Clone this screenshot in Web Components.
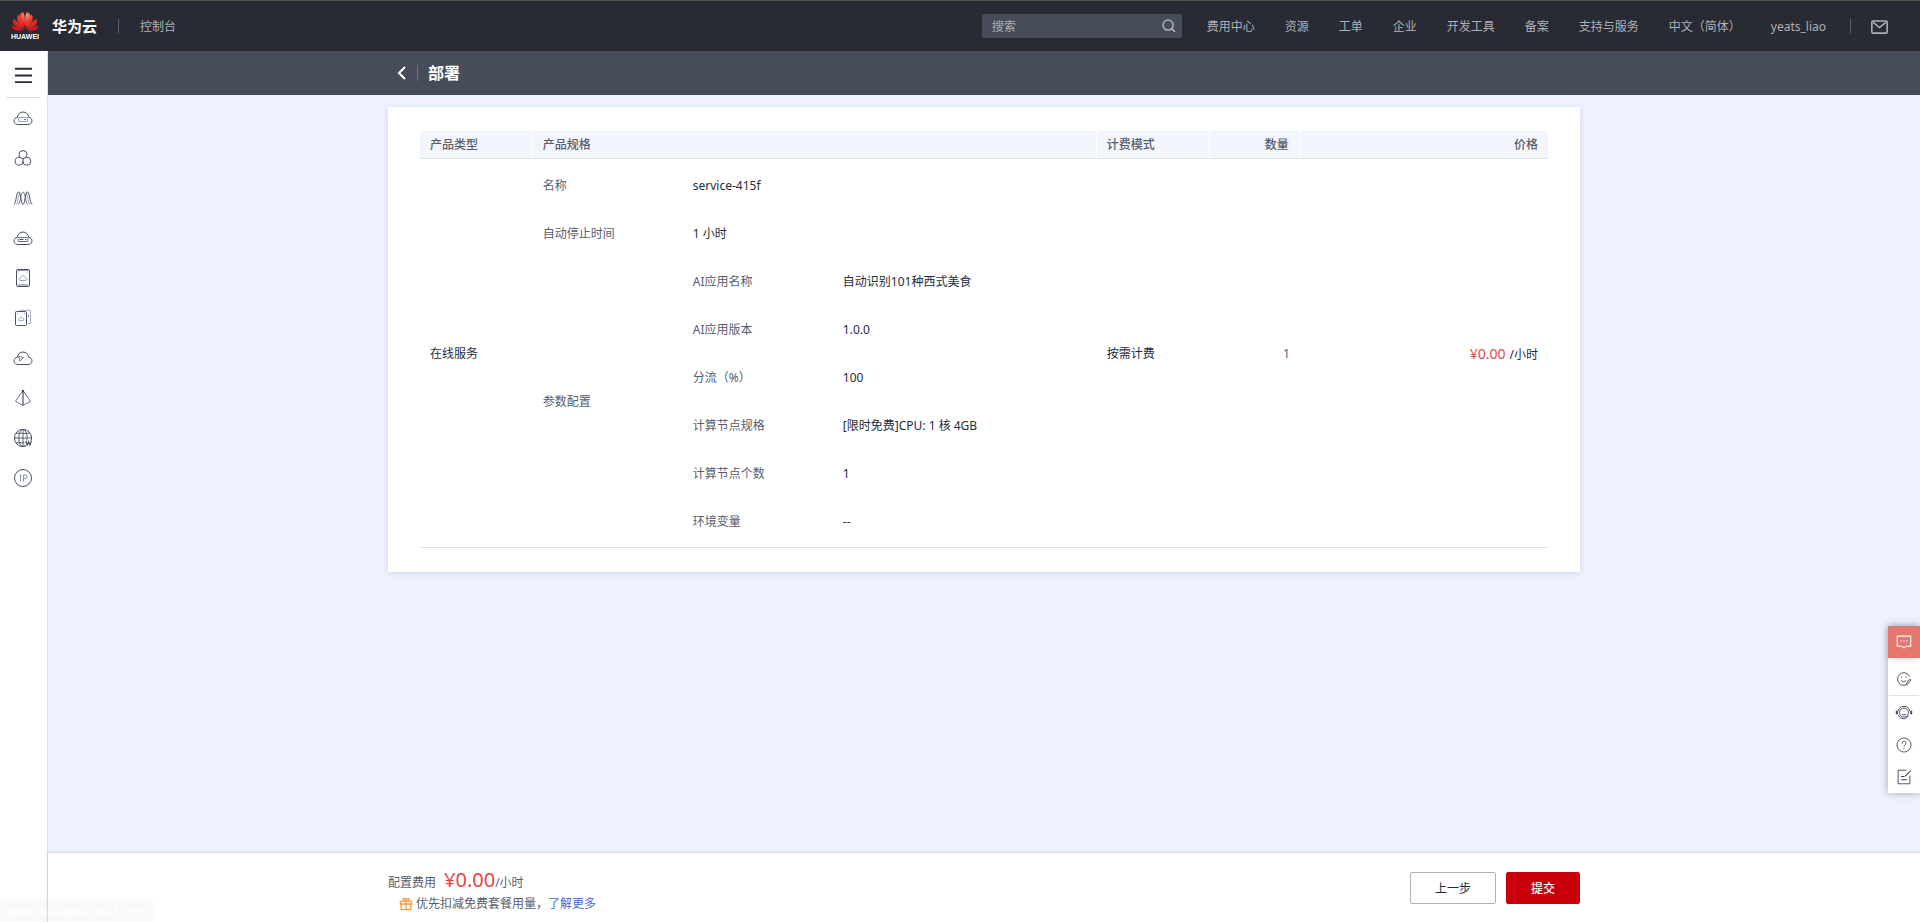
<!DOCTYPE html>
<html lang="zh-CN">
<head>
<meta charset="utf-8">
<meta name="viewport" content="width=device-width, initial-scale=1">
<title>部署 - 华为云</title>
<style>
  body {
    margin: 0;
    font: 12px/18px "Noto Sans", "Noto Sans CJK SC", sans-serif;
    color: #252b3a;
    background: #eef2ff;
  }
</style>
</head>
<body>
<console-app></console-app>

<script>
const define = (name, html, setup) => {
  const template = document.createElement('template');
  template.innerHTML = html;
  customElements.define(name, class extends HTMLElement {
    constructor() {
      super();
      this.attachShadow({ mode: 'open' }).append(template.content.cloneNode(true));
    }
    connectedCallback() {
      if (setup) setup(this, this.shadowRoot);
    }
  });
};

/* Line icons, drawn on a 20 x 20 grid */
const cloud = '<path d="M5 16.500c-2.300 0-4-1.500-4-3.600 0-1.900 1.300-3.200 3.300-3.500C4.500 6.400 6.900 4 10 4s5.500 2.400 5.700 5.400c2 .3 3.300 1.600 3.300 3.500 0 2.100-1.700 3.600-4 3.600z"/>';
const icons = {
  server: cloud + '<rect x="5.500" y="9.500" width="9" height="4" rx=".5" stroke="#7b8db8" stroke-width=".8"/><path d="M11 11.500h2" stroke-width=".8"/>',
  circles: '<circle cx="10" cy="6.600" r="4"/><circle cx="6.200" cy="13.200" r="4"/><circle cx="13.800" cy="13.200" r="4"/><circle cx="10" cy="10.800" r="2.600" fill="#fff" stroke="none"/><path d="M7.400 9.500 10 11l2.600-1.500M10 11v3"/>',
  waves: '<path d="M1 16.500C3.500 14 3.200 4 5.500 4s2.400 12 4.500 12.500C12.100 16 12.200 4 14.500 4s2 10 4.500 12.500"/><path d="M5.500 16.500C7.600 15 7.600 4 10 4s2.400 11 4.500 12.500" stroke-width=".8"/><path d="M3.500 16.500C5 14 5.500 4 7.700 4M12.300 4c2.200 0 2.700 10 4.200 12.500" stroke-width=".5"/>',
  storage: cloud + '<rect x="5" y="9.500" width="10" height="4" rx="1" stroke-width=".8"/><path d="M6.500 11.500h4M12 11.500h1.500"/>',
  disk: '<rect x="3.500" y="1.500" width="13" height="17" rx="1.500"/><path d="M5 2.200h10M5.200 4h.8M14 4h.8M5 17h10" stroke-width=".8"/><path d="M7.500 12.500h5c2 0 1.800-2.700 0-2.700-.4-2.500-4.600-2.500-5 0-1.800 0-2 2.700 0 2.700z" stroke="#7b8db8" stroke-width=".8"/>',
  backup: '<path d="M7 3.500V2.300h10.500v13.200H15" stroke="#a8adc5"/><rect x="2.500" y="3.500" width="11" height="14" rx="1"/><path d="M4.200 5.500H5M11 5.500h.8M15.500 7v2" stroke-width=".8"/><path d="M6.500 12.500h3.300c1.500 0 1.300-2 0-2-.4-1.800-2.900-1.800-3.300 0-1.300 0-1.500 2 0 2z" stroke="#7b8db8" stroke-width=".8"/>',
  cloudbolt: cloud + '<path d="m5.500 8.500 5 1-3.500 3.500-.5-2z" stroke-width=".8"/>',
  prism: '<path d="M10 2.500 2.500 13.200 10 17.500l7.500-4.300z" stroke-width=".8"/><path d="M10 2.500v15" stroke-width="1.200"/><circle cx="10" cy="3.200" r="1.100" fill="#30364a" stroke="none"/>',
  globe: '<circle cx="10" cy="10" r="8.600"/><ellipse cx="10" cy="10" rx="4.200" ry="8.600" stroke-width=".9"/><path d="M10 1.400v17.200M1.400 10h17.200M2.800 5.300h14.400M2.800 14.700h9" stroke-width=".9"/><path d="m12.800 13 1.400 4 1.400-3.500L17 17l1.400-4" stroke="#fff" stroke-width="3"/><path d="m12.800 13 1.400 4 1.400-3.500L17 17l1.400-4" stroke-width="1.200"/>',
  ip: '<circle cx="10" cy="10" r="8.500"/><path d="M7.500 6.500v7M10.400 13.500V6.900h1.500c2.800 0 2.800 3.800 0 3.800h-1.500" stroke="#8088a8"/>',
  menu: '<path d="M1 4h18M1 11h18M1 18h18" stroke-width="2"/>',
  search: '<circle cx="9" cy="9" r="5.600" stroke-width="1.700"/><path d="m13 13 3.600 3.600" stroke-width="2"/>',
  mail: '<rect x="2.700" y="4.700" width="14.600" height="11.600" rx="1" stroke-width="1.500"/><path d="m4 6 6 5 6-5" stroke-width="1.500"/>',
  back: '<path d="m13 4-6 6 6 6" stroke-width="2"/>',
  chat: '<path d="M2.500 3.500h15v11.200h-5.300L10 16.800l-2.200-2.100H2.500z" stroke-width="1.200"/><path d="M6 9h1.400M9.300 9h1.400M12.600 9H14" stroke-width="1.400"/>',
  smile: '<path d="M16.300 7.300A7 7 0 1 0 12.300 16.600c2.200-1 4.200-3.300 5.200-6-1.400 0-2.600.6-3.200 1.700-.6 1.200-.9 2.700-2 4.300"/><path d="M7.300 7.500v1.200M12.300 7.500v1.200M6.500 11.300c1.500 2.200 4.500 2.200 5.700 0"/>',
  headset: '<path d="M3.500 8c.5-3.500 3-5.500 6.500-5.500s6 2 6.500 5.500"/><circle cx="10" cy="9.500" r="5"/><path d="M2 7.500v4M18 7.500v4" stroke-width="2.200"/><path d="M7.500 11c1.200 1.500 3.800 1.500 5 0M3.500 12c1 3 3.500 4.300 6.500 4.300h1M11 16.300l4-3"/>',
  help: '<circle cx="10" cy="10" r="7.800"/><path d="M7.700 8.500c0-3.300 4.600-3.200 4.600-.5 0 1.800-2.300 1.900-2.300 4M10 13.300v1.400"/>',
  edit: '<path d="M16.500 8.500v9h-13v-15h9"/><path d="m17.500 3-6.300 6.300M6.500 9.500h4M6.500 13h7" stroke-width="1.200"/>',
  gift: '<path d="M2 6h16v4H2zM3 10v8h14v-8M10 6v12M10 6C5 6 5 2 7 2s3 2.500 3 4c0-1.500 1-4 3-4s2 4-3 4z" stroke-width="1.800"/>'
};

define('line-icon', `
  <style>
    :host { display: inline-block; width: 20px; height: 20px; flex: none; }
    svg { display: block; width: 100%; height: 100%; fill: none; stroke: currentColor; stroke-width: 1; }
  </style>
  <svg viewBox="0 0 20 20" aria-hidden="true"></svg>`,
  (host, root) => { root.querySelector('svg').innerHTML = icons[host.getAttribute('name')]; });

define('brand-logo', `
  <style>
    :host { display: flex; align-items: center; gap: 13px; }
    svg { display: block; width: 28px; height: 30px; }
    text { font: bold 7px "Liberation Sans", sans-serif; fill: #fff; }
    a { color: #fff; text-decoration: none; font-size: 15px; font-weight: bold; }
  </style>
  <svg viewBox="0 0 28 30" aria-hidden="true">
    <defs><radialGradient id="g" gradientUnits="userSpaceOnUse" cx="15" cy="4" r="19">
      <stop offset="0" stop-color="#f59a78"/><stop offset=".35" stop-color="#ea3a2b"/><stop offset="1" stop-color="#d01018"/>
    </radialGradient></defs>
    <g fill="url(#g)">
      <path d="M13.600 17.800C13 14 11.500 7 7.800 3.500 5.500 5 5.800 8 7 10.500c1.500 3 4.500 5.500 6.600 7.300z"/>
      <path d="M14.400 17.800C15 14 16.500 7 20.200 3.500c2.300 1.500 2 4.500.8 7-1.500 3-4.500 5.500-6.600 7.300z"/>
      <path d="M13.800 15.500C14.200 10.500 14 5 12.600 1.500 9.500 1.300 8.200 3.500 9.200 6c1 3.200 3.200 6.500 4.600 9.500z"/>
      <path d="M14.200 15.500C13.800 10.500 14 5 15.400 1.500c3.100-.2 4.400 2 3.400 4.500-1 3.200-3.200 6.500-4.600 9.500z"/>
      <path d="M12.800 18.500C10 14.500 6.500 10 2.800 8 1.300 10.200 1.700 12.500 4 14.500c2.500 2 6 3.200 8.800 4z"/>
      <path d="M15.200 18.500C18 14.500 21.500 10 25.200 8c1.500 2.200 1.100 4.500-1.200 6.500-2.500 2-6 3.200-8.800 4z"/>
      <path d="M12.300 19.300C8.500 17.500 4.800 15.500 1 14.500c-.3 3 1.200 4.800 4 5 2.500.2 5 0 7.300-.2z"/>
      <path d="M15.700 19.300C19.500 17.500 23.200 15.500 27 14.500c.3 3-1.200 4.800-4 5-2.500.2-5 0-7.300-.2z"/>
    </g>
    <text x="14" y="28" text-anchor="middle">HUAWEI</text>
  </svg>
  <a href="#"><slot></slot></a>`);

define('top-bar', `
  <style>
    :host { display: flex; align-items: center; height: 50px; padding: 0 30px 0 11px;
            border-top: 1px solid #55554f; background: #282b33; color: #adb0b8; }
    a { color: inherit; text-decoration: none; white-space: nowrap; }
    .rule { width: 1px; height: 14px; background: #5a5f6b; }
    .left { display: flex; align-items: center; gap: 21px; flex: 1; }
    .left a, nav { padding-top: 2px; }
    form { display: flex; align-items: center; width: 200px; height: 24px; padding: 0 4px 0 10px; margin-right: 25px;
           box-sizing: border-box; background: #464c59; border-radius: 2px; }
    input { flex: 1; min-width: 0; padding: 2px 0 0; border: 0; outline: 0; background: none; font: inherit; color: #fff; }
    input::placeholder { color: #adb0b8; opacity: 1; }
    form button { display: flex; padding: 0; border: 0; background: none; color: #adb0b8; }
    form line-icon { width: 18px; height: 18px; }
    nav { display: flex; gap: 30px; margin-right: 24px; }
    .mail { display: flex; margin-left: 18px; }
    .mail line-icon { width: 21px; height: 21px; }
  </style>
  <div class="left"><brand-logo>华为云</brand-logo><span class="rule"></span><a href="#">控制台</a></div>
  <form role="search"><input type="text" placeholder="搜索" aria-label="搜索">
    <button type="button" aria-label="搜索"><line-icon name="search"></line-icon></button></form>
  <nav>
    <a href="#">费用中心</a><a href="#">资源</a><a href="#">工单</a><a href="#">企业</a><a href="#">开发工具</a>
    <a href="#">备案</a><a href="#">支持与服务</a><a href="#">中文（简体）</a><a href="#">yeats_liao</a>
  </nav>
  <span class="rule"></span>
  <a class="mail" href="#" aria-label="消息"><line-icon name="mail"></line-icon></a>`);

define('side-bar', `
  <style>
    :host { display: flex; flex-direction: column; align-items: center; box-sizing: border-box; width: 48px;
            padding-right: 1px; background: #fff; border-right: 1px solid #dfe1e6; color: #4a5065; }
    button { display: flex; padding: 13px 0 12px; border: 0; background: none; color: #252b3a; }
    button line-icon { width: 19px; height: 21px; }
    hr { width: 35px; height: 1px; margin: 0; border: 0; background: #dfe1e6; }
    nav { display: flex; flex-direction: column; gap: 20px; padding-top: 10px; }
    a { display: flex; color: inherit; }
  </style>
  <button type="button" aria-label="服务列表"><line-icon name="menu"></line-icon></button>
  <hr>
  <nav>${['server', 'circles', 'waves', 'storage', 'disk', 'backup', 'cloudbolt', 'prism', 'globe', 'ip']
    .map(n => `<a href="#" aria-label="${n}"><line-icon name="${n}"></line-icon></a>`).join('')}</nav>`);

define('page-title', `
  <style>
    :host { display: block; background: #464c59; color: #fff; }
    div { display: flex; align-items: center; width: 1192px; max-width: 100%; height: 44px; margin: 0 auto; }
    button { display: flex; padding: 0; margin: 0 5px 0 4px; border: 0; background: none; color: #fff; }
    i { width: 1px; height: 16px; background: #6b7180; }
    h1 { margin: 0 0 0 10px; font-size: 16px; line-height: 24px; }
  </style>
  <div><button type="button" aria-label="返回"><line-icon name="back"></line-icon></button><i></i><h1><slot></slot></h1></div>`);

define('order-card', `
  <style>
    :host { display: block; box-sizing: border-box; width: 1192px; max-width: 100%; margin: 12px auto 0;
            padding: 24px 32px; background: #fff; box-shadow: 0 1px 6px rgba(60, 80, 150, .16); }
    table { width: 100%; table-layout: fixed; border-collapse: separate; border-spacing: 0; border-bottom: 1px solid #dfe1e6; padding-bottom: 4px; }
    th, td { padding: 0 10px; text-align: left; font-weight: normal; white-space: nowrap; }
    thead th { height: 27px; background: #f2f5fc; border-bottom: 1px solid #dfe1e6; border-right: 1px solid #fff;
               color: #575d6c; font-weight: 500; }
    thead th:last-child { border-right: 0; }
    tbody th, tbody td { height: 42px; padding-top: 6px; }
    tbody th { color: #575d6c; }
    .num { text-align: right; }
    .count { color: #575d6c; }
    .price { color: #e04848; font-size: 14px; margin-right: 4px; }
    .type { width: 10%; } .label { width: 150px; } .mode { width: 10%; } .qty { width: 8%; } .cost { width: 22%; }
  </style>
  <table>
    <colgroup><col class="type"><col class="label"><col class="label"><col><col class="mode"><col class="qty"><col class="cost"></colgroup>
    <thead><tr><th>产品类型</th><th colspan="3">产品规格</th><th>计费模式</th><th class="num">数量</th><th class="num">价格</th></tr></thead>
    <tbody>
      <tr><td rowspan="8">在线服务</td><th>名称</th><td colspan="2">service-415f</td>
        <td rowspan="8">按需计费</td><td rowspan="8" class="num count">1</td>
        <td rowspan="8" class="num"><span class="price">¥0.00</span>/小时</td></tr>
      <tr><th>自动停止时间</th><td colspan="2">1 小时</td></tr>
      <tr><th rowspan="6">参数配置</th><th>AI应用名称</th><td>自动识别101种西式美食</td></tr>
      <tr><th>AI应用版本</th><td>1.0.0</td></tr>
      <tr><th>分流（%）</th><td>100</td></tr>
      <tr><th>计算节点规格</th><td>[限时免费]CPU: 1 核 4GB</td></tr>
      <tr><th>计算节点个数</th><td>1</td></tr>
      <tr><th>环境变量</th><td>--</td></tr>
    </tbody>
  </table>`);

define('order-footer', `
  <style>
    :host { display: block; background: #fff; box-shadow: 0 -1px 3px rgba(70, 70, 120, .2); }
    .row { display: flex; align-items: center; justify-content: space-between; width: 1192px; max-width: 100%; height: 69px; margin: 0 auto; }
    .cost { padding-top: 6px; }
    p { margin: 0; color: #575d6c; }
    .fee { line-height: 24px; }
    .price { margin-left: 8px; font-size: 20px; color: #e04848; }
    .tip { display: flex; align-items: center; padding-left: 11px; }
    line-icon { width: 14px; height: 14px; margin-right: 3px; color: #fa9841; }
    a { color: #4669cf; text-decoration: none; }
    .actions { display: flex; gap: 10px; }
    button { height: 32px; padding: 2px 24px 0; border: 1px solid #adb0b8; border-radius: 2px; background: #fff; color: #252b3a; font: inherit; }
    .submit { border-color: #c7000b; background: #c7000b; color: #fff; font-weight: 500; }
  </style>
  <div class="row">
    <div class="cost">
      <p class="fee">配置费用<span class="price">¥0.00</span>/小时</p>
      <p class="tip"><line-icon name="gift"></line-icon>优先扣减免费套餐用量，<a href="#">了解更多</a></p>
    </div>
    <div class="actions"><button type="button">上一步</button><button type="button" class="submit">提交</button></div>
  </div>`);

define('help-dock', `
  <style>
    :host { display: block; width: 32px; box-shadow: 0 0 8px rgba(60, 70, 110, .45); background: #fff; color: #40465a; }
    a { display: flex; justify-content: center; align-items: center; height: 32px; color: inherit; }
    a line-icon { width: 18px; height: 18px; }
    .chat { background: #e6776f; color: #fff; box-shadow: 0 1px 6px rgba(0, 0, 0, .15); }
    .smile { margin-top: 5px; }
    hr { height: 1px; margin: 0 1px 1px; border: 0; background: #dfe1e6; }
  </style>
  <a class="chat" href="#" aria-label="咨询"><line-icon name="chat"></line-icon></a>
  <a class="smile" href="#" aria-label="满意度"><line-icon name="smile"></line-icon></a>
  <hr>
  <a href="#" aria-label="客服"><line-icon name="headset"></line-icon></a>
  <a href="#" aria-label="帮助"><line-icon name="help"></line-icon></a>
  <a href="#" aria-label="反馈"><line-icon name="edit"></line-icon></a>`);

define('link-status', `
  <style>
    :host { display: block; box-sizing: border-box; height: 23px; padding: 3px 6px 0; background: rgba(225, 225, 225, .2);
            border-radius: 0 3px 0 0; color: #fff; font-size: 13px; }
  </style>
  <slot></slot>`);

define('console-app', `
  <style>
    :host { display: flex; flex-direction: column; min-height: 100vh; }
    .body { display: flex; flex: 1; }
    .content { display: flex; flex-direction: column; flex: 1; min-width: 0; }
    main { flex: 1; padding-bottom: 24px; }
    help-dock { position: fixed; right: 0; bottom: 129px; }
    link-status { position: fixed; left: 0; bottom: 0; }
  </style>
  <top-bar></top-bar>
  <div class="body">
    <side-bar></side-bar>
    <div class="content">
      <page-title>部署</page-title>
      <main><order-card></order-card></main>
      <order-footer></order-footer>
    </div>
  </div>
  <help-dock></help-dock>
  <link-status>www.huaweicloud.com</link-status>`);
</script>
</body>
</html>
